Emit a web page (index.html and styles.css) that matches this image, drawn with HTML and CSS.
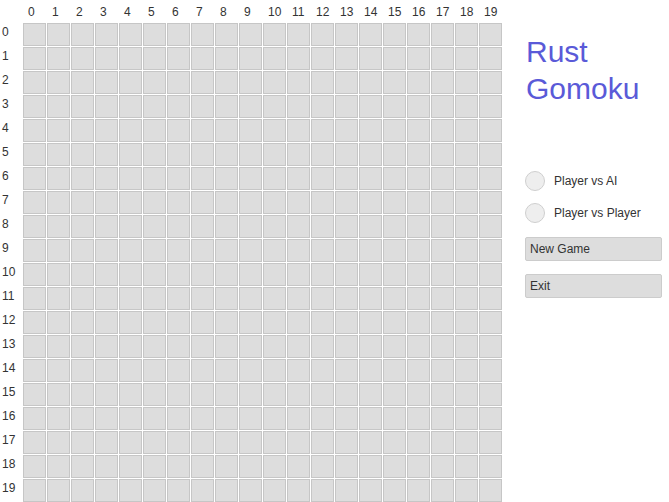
FILE: index.html
```html
<!DOCTYPE html>
<html>
<head>
<meta charset="utf-8">
<link rel="stylesheet" href="styles.css">
</head>
<body>
<div class="app">
  <div class="board">
    <div class="corner"></div>
    <div class="col-label">0</div><div class="col-label">1</div><div class="col-label">2</div><div class="col-label">3</div><div class="col-label">4</div><div class="col-label">5</div><div class="col-label">6</div><div class="col-label">7</div><div class="col-label">8</div><div class="col-label">9</div><div class="col-label">10</div><div class="col-label">11</div><div class="col-label">12</div><div class="col-label">13</div><div class="col-label">14</div><div class="col-label">15</div><div class="col-label">16</div><div class="col-label">17</div><div class="col-label">18</div><div class="col-label">19</div>
    <div class="row-label">0</div><span class="cell"></span><span class="cell"></span><span class="cell"></span><span class="cell"></span><span class="cell"></span><span class="cell"></span><span class="cell"></span><span class="cell"></span><span class="cell"></span><span class="cell"></span><span class="cell"></span><span class="cell"></span><span class="cell"></span><span class="cell"></span><span class="cell"></span><span class="cell"></span><span class="cell"></span><span class="cell"></span><span class="cell"></span><span class="cell"></span>
    <div class="row-label">1</div><span class="cell"></span><span class="cell"></span><span class="cell"></span><span class="cell"></span><span class="cell"></span><span class="cell"></span><span class="cell"></span><span class="cell"></span><span class="cell"></span><span class="cell"></span><span class="cell"></span><span class="cell"></span><span class="cell"></span><span class="cell"></span><span class="cell"></span><span class="cell"></span><span class="cell"></span><span class="cell"></span><span class="cell"></span><span class="cell"></span>
    <div class="row-label">2</div><span class="cell"></span><span class="cell"></span><span class="cell"></span><span class="cell"></span><span class="cell"></span><span class="cell"></span><span class="cell"></span><span class="cell"></span><span class="cell"></span><span class="cell"></span><span class="cell"></span><span class="cell"></span><span class="cell"></span><span class="cell"></span><span class="cell"></span><span class="cell"></span><span class="cell"></span><span class="cell"></span><span class="cell"></span><span class="cell"></span>
    <div class="row-label">3</div><span class="cell"></span><span class="cell"></span><span class="cell"></span><span class="cell"></span><span class="cell"></span><span class="cell"></span><span class="cell"></span><span class="cell"></span><span class="cell"></span><span class="cell"></span><span class="cell"></span><span class="cell"></span><span class="cell"></span><span class="cell"></span><span class="cell"></span><span class="cell"></span><span class="cell"></span><span class="cell"></span><span class="cell"></span><span class="cell"></span>
    <div class="row-label">4</div><span class="cell"></span><span class="cell"></span><span class="cell"></span><span class="cell"></span><span class="cell"></span><span class="cell"></span><span class="cell"></span><span class="cell"></span><span class="cell"></span><span class="cell"></span><span class="cell"></span><span class="cell"></span><span class="cell"></span><span class="cell"></span><span class="cell"></span><span class="cell"></span><span class="cell"></span><span class="cell"></span><span class="cell"></span><span class="cell"></span>
    <div class="row-label">5</div><span class="cell"></span><span class="cell"></span><span class="cell"></span><span class="cell"></span><span class="cell"></span><span class="cell"></span><span class="cell"></span><span class="cell"></span><span class="cell"></span><span class="cell"></span><span class="cell"></span><span class="cell"></span><span class="cell"></span><span class="cell"></span><span class="cell"></span><span class="cell"></span><span class="cell"></span><span class="cell"></span><span class="cell"></span><span class="cell"></span>
    <div class="row-label">6</div><span class="cell"></span><span class="cell"></span><span class="cell"></span><span class="cell"></span><span class="cell"></span><span class="cell"></span><span class="cell"></span><span class="cell"></span><span class="cell"></span><span class="cell"></span><span class="cell"></span><span class="cell"></span><span class="cell"></span><span class="cell"></span><span class="cell"></span><span class="cell"></span><span class="cell"></span><span class="cell"></span><span class="cell"></span><span class="cell"></span>
    <div class="row-label">7</div><span class="cell"></span><span class="cell"></span><span class="cell"></span><span class="cell"></span><span class="cell"></span><span class="cell"></span><span class="cell"></span><span class="cell"></span><span class="cell"></span><span class="cell"></span><span class="cell"></span><span class="cell"></span><span class="cell"></span><span class="cell"></span><span class="cell"></span><span class="cell"></span><span class="cell"></span><span class="cell"></span><span class="cell"></span><span class="cell"></span>
    <div class="row-label">8</div><span class="cell"></span><span class="cell"></span><span class="cell"></span><span class="cell"></span><span class="cell"></span><span class="cell"></span><span class="cell"></span><span class="cell"></span><span class="cell"></span><span class="cell"></span><span class="cell"></span><span class="cell"></span><span class="cell"></span><span class="cell"></span><span class="cell"></span><span class="cell"></span><span class="cell"></span><span class="cell"></span><span class="cell"></span><span class="cell"></span>
    <div class="row-label">9</div><span class="cell"></span><span class="cell"></span><span class="cell"></span><span class="cell"></span><span class="cell"></span><span class="cell"></span><span class="cell"></span><span class="cell"></span><span class="cell"></span><span class="cell"></span><span class="cell"></span><span class="cell"></span><span class="cell"></span><span class="cell"></span><span class="cell"></span><span class="cell"></span><span class="cell"></span><span class="cell"></span><span class="cell"></span><span class="cell"></span>
    <div class="row-label">10</div><span class="cell"></span><span class="cell"></span><span class="cell"></span><span class="cell"></span><span class="cell"></span><span class="cell"></span><span class="cell"></span><span class="cell"></span><span class="cell"></span><span class="cell"></span><span class="cell"></span><span class="cell"></span><span class="cell"></span><span class="cell"></span><span class="cell"></span><span class="cell"></span><span class="cell"></span><span class="cell"></span><span class="cell"></span><span class="cell"></span>
    <div class="row-label">11</div><span class="cell"></span><span class="cell"></span><span class="cell"></span><span class="cell"></span><span class="cell"></span><span class="cell"></span><span class="cell"></span><span class="cell"></span><span class="cell"></span><span class="cell"></span><span class="cell"></span><span class="cell"></span><span class="cell"></span><span class="cell"></span><span class="cell"></span><span class="cell"></span><span class="cell"></span><span class="cell"></span><span class="cell"></span><span class="cell"></span>
    <div class="row-label">12</div><span class="cell"></span><span class="cell"></span><span class="cell"></span><span class="cell"></span><span class="cell"></span><span class="cell"></span><span class="cell"></span><span class="cell"></span><span class="cell"></span><span class="cell"></span><span class="cell"></span><span class="cell"></span><span class="cell"></span><span class="cell"></span><span class="cell"></span><span class="cell"></span><span class="cell"></span><span class="cell"></span><span class="cell"></span><span class="cell"></span>
    <div class="row-label">13</div><span class="cell"></span><span class="cell"></span><span class="cell"></span><span class="cell"></span><span class="cell"></span><span class="cell"></span><span class="cell"></span><span class="cell"></span><span class="cell"></span><span class="cell"></span><span class="cell"></span><span class="cell"></span><span class="cell"></span><span class="cell"></span><span class="cell"></span><span class="cell"></span><span class="cell"></span><span class="cell"></span><span class="cell"></span><span class="cell"></span>
    <div class="row-label">14</div><span class="cell"></span><span class="cell"></span><span class="cell"></span><span class="cell"></span><span class="cell"></span><span class="cell"></span><span class="cell"></span><span class="cell"></span><span class="cell"></span><span class="cell"></span><span class="cell"></span><span class="cell"></span><span class="cell"></span><span class="cell"></span><span class="cell"></span><span class="cell"></span><span class="cell"></span><span class="cell"></span><span class="cell"></span><span class="cell"></span>
    <div class="row-label">15</div><span class="cell"></span><span class="cell"></span><span class="cell"></span><span class="cell"></span><span class="cell"></span><span class="cell"></span><span class="cell"></span><span class="cell"></span><span class="cell"></span><span class="cell"></span><span class="cell"></span><span class="cell"></span><span class="cell"></span><span class="cell"></span><span class="cell"></span><span class="cell"></span><span class="cell"></span><span class="cell"></span><span class="cell"></span><span class="cell"></span>
    <div class="row-label">16</div><span class="cell"></span><span class="cell"></span><span class="cell"></span><span class="cell"></span><span class="cell"></span><span class="cell"></span><span class="cell"></span><span class="cell"></span><span class="cell"></span><span class="cell"></span><span class="cell"></span><span class="cell"></span><span class="cell"></span><span class="cell"></span><span class="cell"></span><span class="cell"></span><span class="cell"></span><span class="cell"></span><span class="cell"></span><span class="cell"></span>
    <div class="row-label">17</div><span class="cell"></span><span class="cell"></span><span class="cell"></span><span class="cell"></span><span class="cell"></span><span class="cell"></span><span class="cell"></span><span class="cell"></span><span class="cell"></span><span class="cell"></span><span class="cell"></span><span class="cell"></span><span class="cell"></span><span class="cell"></span><span class="cell"></span><span class="cell"></span><span class="cell"></span><span class="cell"></span><span class="cell"></span><span class="cell"></span>
    <div class="row-label">18</div><span class="cell"></span><span class="cell"></span><span class="cell"></span><span class="cell"></span><span class="cell"></span><span class="cell"></span><span class="cell"></span><span class="cell"></span><span class="cell"></span><span class="cell"></span><span class="cell"></span><span class="cell"></span><span class="cell"></span><span class="cell"></span><span class="cell"></span><span class="cell"></span><span class="cell"></span><span class="cell"></span><span class="cell"></span><span class="cell"></span>
    <div class="row-label">19</div><span class="cell"></span><span class="cell"></span><span class="cell"></span><span class="cell"></span><span class="cell"></span><span class="cell"></span><span class="cell"></span><span class="cell"></span><span class="cell"></span><span class="cell"></span><span class="cell"></span><span class="cell"></span><span class="cell"></span><span class="cell"></span><span class="cell"></span><span class="cell"></span><span class="cell"></span><span class="cell"></span><span class="cell"></span><span class="cell"></span>
  </div>
  <div class="panel">
    <h1 class="title">Rust<br>Gomoku</h1>
    <div class="modes">
      <label class="mode"><span class="radio"></span><span class="mode-text">Player vs AI</span></label>
      <label class="mode"><span class="radio"></span><span class="mode-text">Player vs Player</span></label>
    </div>
    <div class="actions">
      <button class="btn">New Game</button>
      <button class="btn">Exit</button>
    </div>
  </div>
</div>
</body>
</html>
```

FILE: styles.css
```css
html, body {
  margin: 0;
  padding: 0;
  background: #ffffff;
}

body {
  font-family: "Liberation Sans", Arial, sans-serif;
  font-size: 12px;
  color: #333333;
}

.app {
  display: flex;
  align-items: flex-start;
}

.board {
  display: grid;
  grid-template-columns: 22px repeat(20, 23px);
  grid-template-rows: 22px repeat(20, 23px);
  gap: 1px;
  background: #ffffff;
}

.col-label {
  padding-top: 5px;
  padding-left: 5px;
  line-height: 14px;
  color: #333;
}

.row-label {
  padding-top: 2px;
  padding-left: 2px;
  line-height: 14px;
  color: #333;
}

.cell {
  display: block;
  box-sizing: border-box;
  width: 23px;
  height: 23px;
  background: #dddddd;
  border: 1px solid #c6c6c6;
}

.panel {
  width: 137px;
  margin-left: 23px;
  display: flex;
  flex-direction: column;
}

.title {
  margin: 33px 0 0 1px;
  font-size: 30px;
  line-height: 37px;
  font-weight: normal;
  color: #5a5ad8;
}

.modes {
  margin-top: 64px;
  display: flex;
  flex-direction: column;
  gap: 12px;
}

.mode {
  display: flex;
  align-items: center;
  gap: 9px;
  height: 20px;
  font-size: 12px;
  color: #333;
}

.radio {
  box-sizing: border-box;
  width: 20px;
  height: 20px;
  border-radius: 50%;
  background: #eeeeee;
  border: 1px solid #cfcfcf;
}

.actions {
  margin-top: 14px;
  display: flex;
  flex-direction: column;
  gap: 13px;
}

.btn {
  box-sizing: border-box;
  width: 137px;
  height: 24px;
  margin: 0;
  padding: 0 4px 1px;
  text-align: left;
  font-family: "Liberation Sans", Arial, sans-serif;
  font-size: 12px;
  color: #333;
  background: #dddddd;
  border: 1px solid #cccccc;
  border-radius: 2px;
}
```
